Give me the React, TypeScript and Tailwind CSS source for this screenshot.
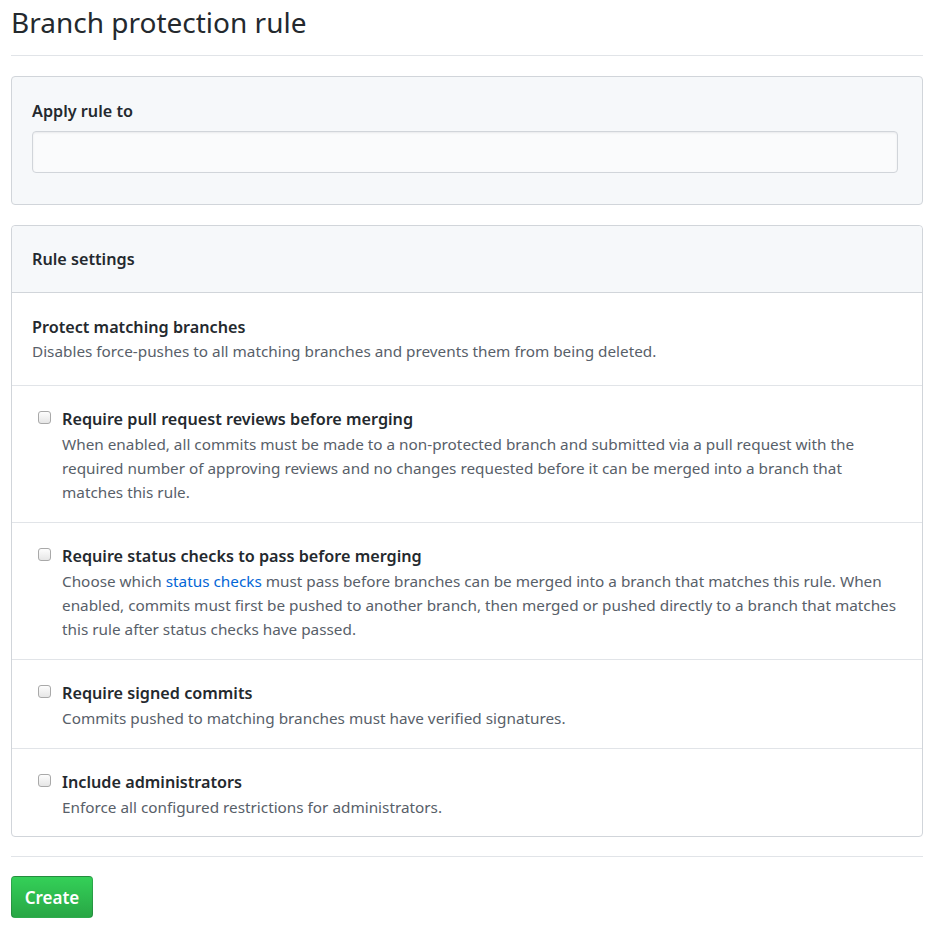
import React from "react";

const font = { fontFamily: '"Noto Sans", "Open Sans", Arial, sans-serif' };

const Checkbox = () => (
  <div className="w-[30px] shrink-0 pl-[6px] pt-[5px]">
    <div className="h-[13px] w-[13px] rounded-[3px] border border-[#a9a9a9] bg-gradient-to-b from-[#fdfdfd] to-[#e6e6e6]" />
  </div>
);

const Row = ({
  title,
  children,
  last,
}: {
  title: string;
  children: React.ReactNode;
  last?: boolean;
}) => (
  <div className={"flex px-5 pt-5 " + (last ? "pb-[17px]" : "pb-[18px] border-b border-[#e1e4e8]")}>
    <Checkbox />
    <div>
      <div className="text-[16.2px] font-semibold leading-[26px] text-[#24292e]">{title}</div>
      <div className="whitespace-nowrap text-[15.3px] leading-[24px] text-[#586069]">{children}</div>
    </div>
  </div>
);

const App = () => {
  return (
    <div className="min-h-screen bg-white px-[11px] pb-8" style={font}>
      <div className="w-[912px]">
        <div className="border-b border-[#e1e4e8] pt-[3px] pb-[14px]">
          <h1 className="text-[28px] leading-[38px] font-normal text-[#24292e]">Branch protection rule</h1>
        </div>

        <div className="mt-5 rounded-[4px] border border-[#d1d5da] bg-[#f6f8fa] pl-5 pr-[24px] pt-[22px] pb-[31px]">
          <div className="text-[16.2px] font-semibold leading-[24px] text-[#24292e]">Apply rule to</div>
          <input
            type="text"
            className="mt-[8px] block h-[42px] w-full rounded-[4px] border border-[#d1d5da] bg-[#fafbfc] shadow-[inset_0_1px_2px_rgba(27,31,35,0.075)] outline-none"
          />
        </div>

        <div className="mt-5 rounded-[4px] border border-[#d1d5da]">
          <div className="flex h-[67px] items-center rounded-t-[4px] border-b border-[#d1d5da] bg-[#f6f8fa] px-5 text-[16.2px] font-semibold text-[#24292e]">
            Rule settings
          </div>

          <div className="border-b border-[#e1e4e8] px-5 pt-[22px] pb-[22px]">
            <div className="text-[16.2px] font-semibold leading-[24px] text-[#24292e]">Protect matching branches</div>
            <div className="text-[15.3px] leading-[24px] text-[#586069]">
              Disables force-pushes to all matching branches and prevents them from being deleted.
            </div>
          </div>

          <Row title="Require pull request reviews before merging">
            When enabled, all commits must be made to a non-protected branch and submitted via a pull request with the
            <br />
            required number of approving reviews and no changes requested before it can be merged into a branch that
            <br />
            matches this rule.
          </Row>

          <Row title="Require status checks to pass before merging">
            Choose which <a className="text-[#0366d6]">status checks</a> must pass before branches can be merged into a
            branch that matches this rule. When
            <br />
            enabled, commits must first be pushed to another branch, then merged or pushed directly to a branch that matches
            <br />
            this rule after status checks have passed.
          </Row>

          <Row title="Require signed commits">Commits pushed to matching branches must have verified signatures.</Row>

          <Row title="Include administrators" last>
            Enforce all configured restrictions for administrators.
          </Row>
        </div>

        <div className="mt-[19px] border-t border-[#e1e4e8] pt-[19px]">
          <button className="h-[42px] w-[82px] rounded-[4px] border border-[rgba(27,31,35,0.2)] bg-gradient-to-b from-[#34d058] to-[#28a745] pt-[1px] text-[17px] font-semibold text-white">
            Create
          </button>
        </div>
      </div>
    </div>
  );
};

export default App;
